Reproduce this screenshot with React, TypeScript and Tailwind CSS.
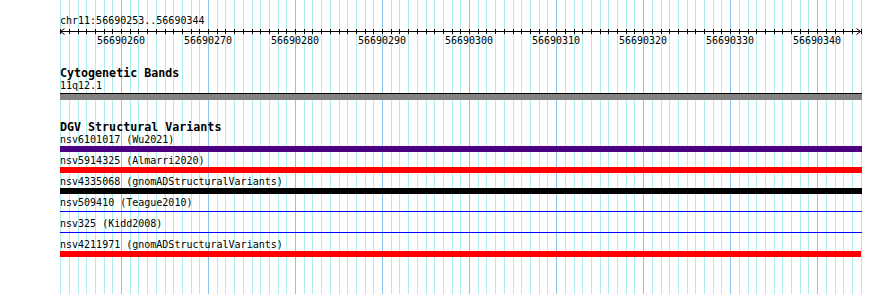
import React from "react";

const START = 56690253;
const N = 93;
const xs = Array.from({ length: N }, (_, i) => Math.round(60.1 + i * 8.702));

const rows: { label: string; kind: "bar" | "line"; color: string; w?: string }[] = [
  { label: "nsv6101017 (Wu2021)", kind: "bar", color: "bg-[#4b0082]" },
  { label: "nsv5914325 (Almarri2020)", kind: "bar", color: "bg-[#ff0000]" },
  { label: "nsv4335068 (gnomADStructuralVariants)", kind: "bar", color: "bg-black" },
  { label: "nsv509410 (Teague2010)", kind: "line", color: "bg-[#0000ff]" },
  { label: "nsv325 (Kidd2008)", kind: "line", color: "bg-[#0000ff]" },
  { label: "nsv4211971 (gnomADStructuralVariants)", kind: "bar", color: "bg-[#ff0000]", w: "w-[801px]" },
];

function Grid() {
  return (
    <svg className="absolute inset-0" width={890} height={294} shapeRendering="crispEdges">
      {xs.map((x, i) => (
        <line
          key={i}
          x1={x + 0.5}
          x2={x + 0.5}
          y1={0}
          y2={294}
          stroke={i % 10 === 7 ? "#8cc6ea" : "#aeeef0"}
          strokeWidth={1}
        />
      ))}
    </svg>
  );
}

function Ruler() {
  return (
    <svg width={802} height={20} className="block" shapeRendering="crispEdges">
      <line x1={0} x2={801} y1={4.5} y2={4.5} stroke="#000" />
      {xs.map((x, i) => (
        <line key={i} x1={x - 60 + 0.5} x2={x - 60 + 0.5} y1={2} y2={7} stroke="#000" />
      ))}
      <polyline points="4.5,1.5 0.5,4.5 4.5,7.5" fill="none" stroke="#000" shapeRendering="auto" />
      <polyline points="796.5,1.5 800.5,4.5 796.5,7.5" fill="none" stroke="#000" shapeRendering="auto" />
      {xs.map((x, i) =>
        i % 10 === 7 ? (
          <text
            key={"t" + i}
            x={x - 60}
            y={17.2}
            textAnchor="middle"
            fontSize={10}
            fontFamily="'DejaVu Sans Mono', monospace"
            fill="#000"
          >
            {START + i}
          </text>
        ) : null
      )}
    </svg>
  );
}

export default function App() {
  return (
    <div className="relative w-[890px] h-[294px] bg-white overflow-hidden text-black font-['DejaVu_Sans_Mono',monospace]">
      <Grid />
      <div className="relative flex flex-col pl-[60px] pt-[15px] w-[862px]">
        <div className="h-[12px] text-[10px] leading-[12px] whitespace-pre">chr11:56690253..56690344</div>
        <Ruler />
        <div className="mt-[20px] h-[13px] text-[11.67px] leading-[13px] font-bold whitespace-pre">Cytogenetic Bands</div>
        <div className="h-[12px] text-[10px] leading-[12px] whitespace-pre">11q12.1</div>
        <div className="mt-[1px] h-[7px] w-[802px] border-t border-black bg-[#828282]" />
        <div className="mt-[21px] h-[13px] text-[11.67px] leading-[13px] font-bold whitespace-pre">DGV Structural Variants</div>
        <div className="flex flex-col gap-[3px]">
          {rows.map((r) => (
            <div key={r.label} className="flex flex-col">
              <div className="h-[12px] text-[10px] leading-[12px] whitespace-pre">{r.label}</div>
              <div className="h-[6px] flex flex-col">
                {r.kind === "bar" ? (
                  <div className={`h-[6px] ${r.w ?? "w-[802px]"} ${r.color}`} />
                ) : (
                  <div className={`mt-[2px] h-[1px] w-[802px] ${r.color}`} />
                )}
              </div>
            </div>
          ))}
        </div>
      </div>
    </div>
  );
}
